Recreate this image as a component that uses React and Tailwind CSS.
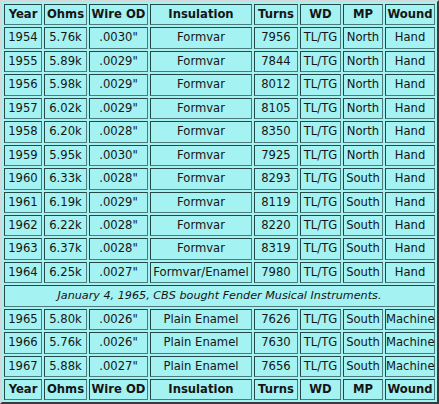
const rows = [
  ['1954', '5.76k', '.0030"', 'Formvar', '7956', 'TL/TG', 'North', 'Hand'],
  ['1955', '5.89k', '.0029"', 'Formvar', '7844', 'TL/TG', 'North', 'Hand'],
  ['1956', '5.98k', '.0029"', 'Formvar', '8012', 'TL/TG', 'North', 'Hand'],
  ['1957', '6.02k', '.0029"', 'Formvar', '8105', 'TL/TG', 'North', 'Hand'],
  ['1958', '6.20k', '.0028"', 'Formvar', '8350', 'TL/TG', 'North', 'Hand'],
  ['1959', '5.95k', '.0030"', 'Formvar', '7925', 'TL/TG', 'North', 'Hand'],
  ['1960', '6.33k', '.0028"', 'Formvar', '8293', 'TL/TG', 'South', 'Hand'],
  ['1961', '6.19k', '.0029"', 'Formvar', '8119', 'TL/TG', 'South', 'Hand'],
  ['1962', '6.22k', '.0028"', 'Formvar', '8220', 'TL/TG', 'South', 'Hand'],
  ['1963', '6.37k', '.0028"', 'Formvar', '8319', 'TL/TG', 'South', 'Hand'],
  ['1964', '6.25k', '.0027"', 'Formvar/Enamel', '7980', 'TL/TG', 'South', 'Hand'],
];

const later = [
  ['1965', '5.80k', '.0026"', 'Plain Enamel', '7626', 'TL/TG', 'South', 'Machine'],
  ['1966', '5.76k', '.0026"', 'Plain Enamel', '7630', 'TL/TG', 'South', 'Machine'],
  ['1967', '5.88k', '.0027"', 'Plain Enamel', '7656', 'TL/TG', 'South', 'Machine'],
];

const heads = ['Year', 'Ohms', 'Wire OD', 'Insulation', 'Turns', 'WD', 'MP', 'Wound'];

const cell = "h-[21.45px] p-0 text-center whitespace-nowrap border border-t-[#244848] border-l-[#244848] border-b-[#4d7a7a] border-r-[#4d7a7a]";

function Row({ data, head }) {
  return (
    <tr>
      {data.map((v, i) => (
        <td key={i} className={cell + (head ? " font-bold" : "")}>{v}</td>
      ))}
    </tr>
  );
}

export default function App() {
  return (
    <div className="w-[439px] h-[404px] bg-[#a4f2f2] overflow-hidden">
      <table
        className="w-[439px] table-fixed border-separate border-spacing-[2px] bg-[#a4f2f2] text-[#151515] text-[11.6px] border-2 border-t-[#d8d8d8] border-l-[#d8d8d8] border-r-[#3a3a3a] border-b-[#3a3a3a]"
        style={{ fontFamily: '"DejaVu Sans", Verdana, sans-serif' }}
      >
        <colgroup>
          <col className="w-[38px]" />
          <col className="w-[43px]" />
          <col className="w-[59px]" />
          <col className="w-[102px]" />
          <col className="w-[44px]" />
          <col className="w-[41px]" />
          <col className="w-[40px]" />
          <col className="w-[50px]" />
        </colgroup>
        <tbody>
          <Row data={heads} head />
          {rows.map(r => <Row key={r[0]} data={r} />)}
          <tr>
            <td colSpan={8} className={cell + " italic text-[11.2px]"}>
              January 4, 1965, CBS bought Fender Musical Instruments.
            </td>
          </tr>
          {later.map(r => <Row key={r[0]} data={r} />)}
          <Row data={heads} head />
        </tbody>
      </table>
    </div>
  );
}
